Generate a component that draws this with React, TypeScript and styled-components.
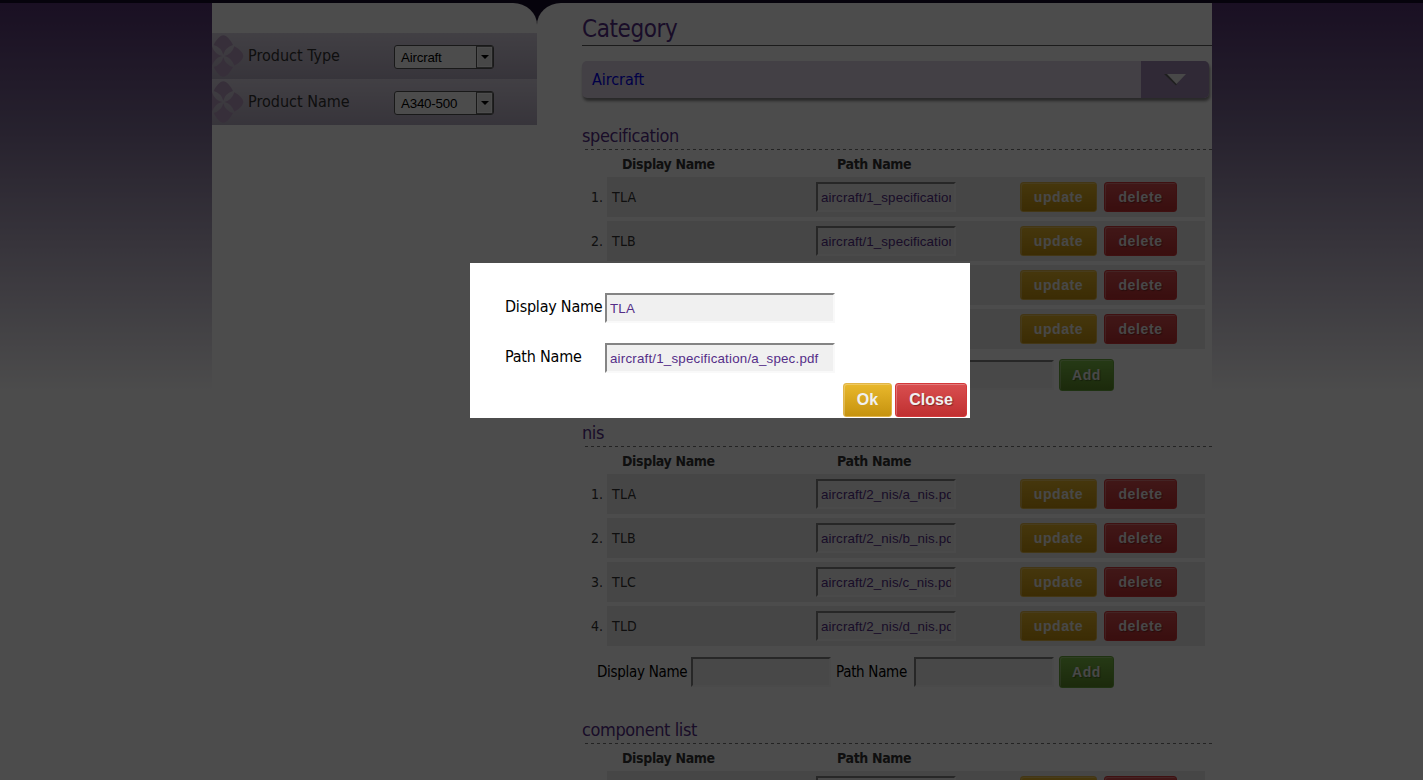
import React from "react";
import styled, { createGlobalStyle, css } from "styled-components";

const GlobalStyle = createGlobalStyle`
  * { box-sizing: border-box; }
  html, body { margin: 0; height: 780px; overflow: hidden; }
  body {
    background: #fff;
    color: #000;
    font-family: "DejaVu Sans Condensed", "DejaVu Sans", sans-serif;
    font-stretch: condensed;
    font-size: 16px;
  }
`;

const Page = styled.div`
  height: 780px;
  overflow: hidden;
  border-top: 3px solid #170d2b;
  background: linear-gradient(#573575 0, #82719a 127px, #fff 390px);
`;

const Wrapper = styled.div`
  width: 1000px;
  height: 777px;
  margin: 0 auto 0 212px;
  display: grid;
  grid-template-columns: 325px 675px;
  background: #170d2b;
`;

const Sidebar = styled.aside`
  background: #fff;
  border-top-right-radius: 24px 22px;
  padding-top: 30px;
`;

const FilterRow = styled.div`
  display: flex;
  align-items: center;
  height: 46px;
  background: linear-gradient(#dcd5e4, #b9b0c5);
  color: #333;
  letter-spacing: 0;
`;

const FilterLabel = styled.span`
  width: 146px;
  padding-bottom: 2px;
  margin-left: 4px;
`;

const SelectBox = styled.div`
  display: flex;
  width: 100px;
  height: 24px;
  margin-top: 2px;
  border: 1px solid #555;
  border-radius: 3px;
  background: #fff;
  color: #000;
  font: 13.33px/24px "Liberation Sans", sans-serif;
  letter-spacing: -0.2px;
`;

const SelectValue = styled.span`
  flex: 1;
  padding-left: 6px;
`;

const SelectArrow = styled.span`
  width: 17px;
  display: grid;
  place-items: center;
  border: 1px solid #777;
  border-left-color: #555;
  background: #eee;
  box-shadow: inset 0 0 0 1px #fff;
`;

const Main = styled.main`
  background: #fff;
  border-top-left-radius: 24px 22px;
  padding-left: 45px;
  overflow: hidden;
`;

const Title = styled.h1`
  margin: 0;
  height: 43px;
  padding-top: 11px;
  border-bottom: 1px solid #5c5c5c;
  color: #552e88;
  font-size: 24px;
  font-weight: 400;
  line-height: 30px;
  letter-spacing: -0.4px;
`;

const CategoryBar = styled.div`
  display: flex;
  width: 627px;
  height: 37px;
  margin-top: 15px;
  border-radius: 5px;
  overflow: hidden;
  box-shadow: 1px 3px 3px #888;
  background: #dfd5e6;
`;

const CategoryName = styled.a`
  flex: 1;
  padding-left: 10px;
  color: #0000ee;
  line-height: 37px;
  letter-spacing: -0.05px;
`;

const CategoryToggle = styled.span`
  width: 68px;
  padding-left: 22px;
  padding-top: 10px;
  background: #a089b4;
`;

const Sections = styled.div`
  padding-top: 26px;
`;

const Section = styled.section`
  height: 297px;
`;

const SectionTitle = styled.h2`
  margin: 0;
  height: 25px;
  color: #552e88;
  font-size: 18px;
  font-weight: 400;
  line-height: 24px;
  letter-spacing: -0.4px;
`;

const DashedRule = styled.div`
  height: 1px;
  margin-left: 3px;
  background: repeating-linear-gradient(90deg, #777 0 3px, transparent 3px 6px);
`;

const ColumnHeads = styled.div`
  display: flex;
  height: 27px;
  padding-left: 40px;
  color: #333;
  font-size: 14px;
  font-weight: 700;
  line-height: 28px;
  letter-spacing: -0.35px;
`;

const ColumnHead = styled.span`
  width: 215px;
`;

const Item = styled.div`
  display: flex;
  height: 40px;
  margin-bottom: 4px;
  color: #333;
  font-size: 14px;
  line-height: 40px;
`;

const ItemNumber = styled.span`
  width: 25px;
  padding-right: 4px;
  text-align: right;
`;

const ItemBody = styled.div`
  display: flex;
  align-items: center;
  width: 598px;
  background: #ececec;
`;

const ItemName = styled.span`
  width: 209px;
  padding-left: 5px;
  letter-spacing: 0.2px;
`;

const Field = styled.input<{ $width?: number }>`
  width: ${(p) => p.$width ?? 140}px;
  height: 30px;
  padding: 1px 3px;
  border: 2px solid;
  border-color: #848484 #f9f9f9 #f9f9f9 #848484;
  border-radius: 0;
  outline: none;
  background: #f0f0f0;
  color: #552e88;
  font: 13.33px "Liberation Sans", sans-serif;
  letter-spacing: ${(p) => (p.$width ? 0.2 : 0.1)}px;
`;

const ItemActions = styled.div`
  display: flex;
  gap: 7px;
  margin-left: 64px;
`;

const tones = {
  yellow: css`
    background: linear-gradient(#e9b82c, #c6930f);
    border-color: #e2b548;
    text-shadow: none;
  `,
  red: css`
    background: linear-gradient(#d94f50, #c03031);
    border-color: #d4383a;
  `,
  green: css`
    background: linear-gradient(#7fc149, #5d8c28);
    border-color: #6aa83c;
  `,
};

const Button = styled.button<{ $tone: keyof typeof tones; $width: number; $height: number; $large?: boolean }>`
  width: ${(p) => p.$width}px;
  height: ${(p) => p.$height}px;
  padding: 0;
  border: 1px solid;
  border-radius: 3px;
  color: #f0f0f0;
  font: 700 ${(p) => (p.$large ? 16 : 14)}px "Liberation Sans", sans-serif;
  letter-spacing: ${(p) => (p.$large ? 0 : 0.6)}px;
  text-shadow: 1px 1px 1px rgba(0, 0, 0, 0.35);
  box-shadow: inset 1px 1px 0 rgba(255, 255, 255, 0.25);
  ${(p) => tones[p.$tone]}
`;

const AddRow = styled.form`
  display: flex;
  align-items: center;
  height: 32px;
  padding-left: 15px;
  margin-top: 10px;
  font-size: 15px;
  letter-spacing: -0.3px;
`;

const AddLabel = styled.label<{ $width: number }>`
  width: ${(p) => p.$width}px;
  white-space: nowrap;
`;

const Gap = styled.span`
  width: 5px;
`;

const Overlay = styled.div`
  position: fixed;
  inset: 0;
  background: rgba(0, 0, 0, 0.7);
`;

const Dialog = styled.div`
  position: fixed;
  left: 470px;
  top: 263px;
  width: 500px;
  height: 155px;
  padding: 30px 3px 0 35px;
  background: #fff;
`;

const DialogRow = styled.div`
  display: flex;
  height: 30px;
  margin-bottom: 20px;
  line-height: 27px;
  letter-spacing: -0.22px;

  &:nth-child(2) { margin-bottom: 10px; }
`;

const DialogLabel = styled.label`
  width: 100px;
  white-space: nowrap;
`;

const DialogActions = styled.div`
  display: flex;
  justify-content: flex-end;
  gap: 3px;
`;

const Flower = () => (
  <svg width="32" height="46" viewBox="0 0 32 46" fill="#ba9fc3">
    <path d="M11.3 21.8Q9.3 14.3 1.7 12C4 7 8 2.3 11.3 2.3S18.6 7 21 12Q13.3 14.3 11.3 21.8Z" />
    <path d="M11.3 24.2Q9.3 31.7 1.7 34C4 39 8 43.7 11.3 43.7S18.6 39 21 34Q13.3 31.7 11.3 24.2Z" />
    <path d="M12.5 23Q20 21 22.3 13.3C27 15.6 31.3 19.7 31.3 23S27 30.4 22.3 32.7Q20 25 12.5 23Z" />
    <path d="M0 13.2Q2.6 21 10.1 23Q2.6 25 0 32.8Z" />
  </svg>
);

const Select = ({ value }: { value: string }) => (
  <SelectBox>
    <SelectValue>{value}</SelectValue>
    <SelectArrow>
      <svg width="8" height="4" viewBox="0 0 8 4"><path d="M0 0H8L4 4Z" fill="#000" /></svg>
    </SelectArrow>
  </SelectBox>
);

const groups = [
  { title: "specification", path: (k: string) => `aircraft/1_specification/${k}_spec.pdf` },
  { title: "nis", path: (k: string) => `aircraft/2_nis/${k}_nis.pdf` },
  { title: "component list", path: (k: string) => `aircraft/3_component/${k}_list.pdf` },
];

const keys = ["a", "b", "c", "d"];

export default function App() {
  return (
    <>
      <GlobalStyle />
      <Page>
        <Wrapper>
          <Sidebar>
            <FilterRow>
              <Flower />
              <FilterLabel>Product Type</FilterLabel>
              <Select value="Aircraft" />
            </FilterRow>
            <FilterRow>
              <Flower />
              <FilterLabel>Product Name</FilterLabel>
              <Select value="A340-500" />
            </FilterRow>
          </Sidebar>
          <Main>
            <Title>Category</Title>
            <CategoryBar>
              <CategoryName>Aircraft</CategoryName>
              <CategoryToggle>
                <svg width="26" height="16" viewBox="0 0 26 16">
                  <path d="M1 3H20L13 14.5Z" fill="#666" />
                  <path d="M4 3H23L13.5 13Z" fill="#f0f0f0" />
                </svg>
              </CategoryToggle>
            </CategoryBar>
            <Sections>
              {groups.map((g) => (
                <Section key={g.title}>
                  <SectionTitle>{g.title}</SectionTitle>
                  <DashedRule />
                  <ColumnHeads>
                    <ColumnHead>Display Name</ColumnHead>
                    <ColumnHead>Path Name</ColumnHead>
                  </ColumnHeads>
                  {keys.map((k, i) => (
                    <Item key={k}>
                      <ItemNumber>{i + 1}.</ItemNumber>
                      <ItemBody>
                        <ItemName>TL{k.toUpperCase()}</ItemName>
                        <Field defaultValue={g.path(k)} />
                        <ItemActions>
                          <Button $tone="yellow" $width={77} $height={30}>update</Button>
                          <Button $tone="red" $width={73} $height={30}>delete</Button>
                        </ItemActions>
                      </ItemBody>
                    </Item>
                  ))}
                  <AddRow>
                    <AddLabel $width={94}>Display Name</AddLabel>
                    <Field />
                    <Gap />
                    <AddLabel $width={78}>Path Name</AddLabel>
                    <Field />
                    <Gap />
                    <Button type="button" $tone="green" $width={55} $height={32}>Add</Button>
                  </AddRow>
                </Section>
              ))}
            </Sections>
          </Main>
        </Wrapper>
      </Page>
      <Overlay />
      <Dialog role="dialog">
        <DialogRow>
          <DialogLabel>Display Name</DialogLabel>
          <Field $width={230} defaultValue="TLA" />
        </DialogRow>
        <DialogRow>
          <DialogLabel>Path Name</DialogLabel>
          <Field $width={230} defaultValue="aircraft/1_specification/a_spec.pdf" />
        </DialogRow>
        <DialogActions>
          <Button $tone="yellow" $width={49} $height={34} $large>Ok</Button>
          <Button $tone="red" $width={72} $height={34} $large>Close</Button>
        </DialogActions>
      </Dialog>
    </>
  );
}
